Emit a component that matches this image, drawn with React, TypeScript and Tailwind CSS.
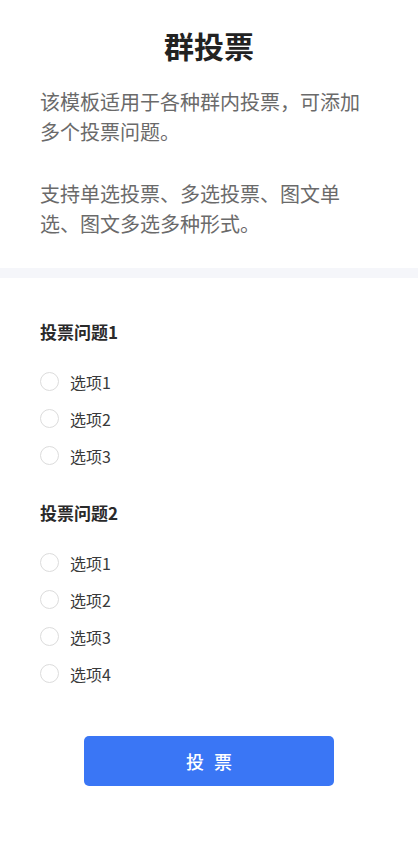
import React from "react";

const font = { fontFamily: '"Noto Sans CJK SC", "Noto Sans", sans-serif' };

function Radio({ label }: { label: string }) {
  return (
    <div className="flex h-[37px] items-center">
      <span className="box-border h-[19px] w-[19px] rounded-full border border-[#dcdcdc] bg-white" />
      <span className="ml-[11px] text-[16px] leading-[24px] text-[#3a3a3a]">{label}</span>
    </div>
  );
}

function Question({ title, options, first }: { title: string; options: string[]; first?: boolean }) {
  return (
    <div className={first ? "" : "mt-[26px]"}>
      <div className="text-[17px] font-bold leading-[25px] text-[#2a2a2a]">{title}</div>
      <div className="mt-[19px] flex flex-col">
        {options.map((o) => (
          <Radio key={o} label={o} />
        ))}
      </div>
    </div>
  );
}

export default function App() {
  return (
    <div className="min-h-[846px] w-[418px] bg-white" style={font}>
      <div className="px-[40px] pt-[23px] pb-[29px]">
        <h1 className="text-center text-[30px] font-bold leading-[45px] text-[#222]">群投票</h1>
        <p className="mt-[19px] text-[20px] leading-[30px] text-[#6a6a6a]">
          该模板适用于各种群内投票，可添加多个投票问题。
        </p>
        <p className="mt-[32px] text-[20px] leading-[30px] text-[#6a6a6a]">
          支持单选投票、多选投票、图文单选、图文多选多种形式。
        </p>
      </div>
      <div className="h-[10px] bg-[#f5f6fa]" />
      <div className="px-[40px] pt-[41px]">
        <Question first title="投票问题1" options={["选项1", "选项2", "选项3"]} />
        <Question title="投票问题2" options={["选项1", "选项2", "选项3", "选项4"]} />
        <div className="mt-[44px] flex justify-center">
          <button className="flex h-[50px] w-[250px] items-center justify-center gap-[10px] rounded-[5px] bg-[#3a76f5] text-[18px] font-medium text-white">
            <span>投</span>
            <span>票</span>
          </button>
        </div>
      </div>
    </div>
  );
}
